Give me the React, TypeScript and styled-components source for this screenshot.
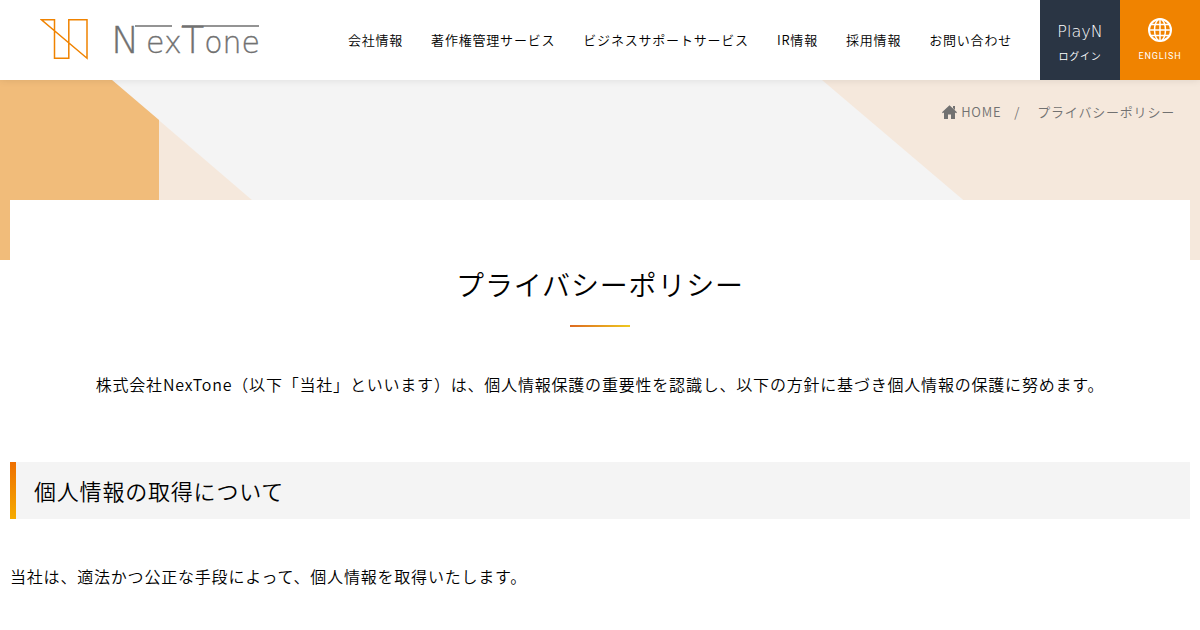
import React from "react";
import styled, { createGlobalStyle, css } from "styled-components";

const GlobalStyle = createGlobalStyle`
  *, *::before, *::after { box-sizing: border-box; }
  body {
    margin: 0;
    background: #fff;
    color: #000;
    font-family: "Noto Sans CJK JP DemiLight", "Noto Sans CJK JP", sans-serif;
    font-size: 16px;
    font-weight: 350;
    line-height: 32px;
    letter-spacing: 0.05em;
  }
  a { color: inherit; text-decoration: none; }
  h1, h2, p, ul, ol { margin: 0; padding: 0; }
  h1, h2 { font-weight: inherit; }
  ul, ol { list-style: none; }
  svg { display: block; }
`;

const Header = styled.header`
  position: relative;
  z-index: 2;
  display: flex;
  align-items: center;
  min-height: 80px;
  background: #fff;
  box-shadow: 0 0 8px rgba(0, 0, 0, 0.1);
`;

const LogoLink = styled.a`
  margin-left: 40px;
  margin-right: auto;
`;

const WordmarkText = styled.text`
  font-family: "DejaVu Sans Light", "DejaVu Sans", sans-serif;
  font-size: 30px;
  font-weight: 200;
  letter-spacing: 0;
  fill: #717171;
  stroke: #717171;
  stroke-width: 0.3;
`;

const Capital = styled.tspan`
  font-size: 38px;
`;

const Menu = styled.ul`
  display: flex;
  gap: 28px;
  margin-right: 28px;
  font-size: 13px;
  line-height: 20px;
  white-space: nowrap;
`;

const tones = {
  navy: css`
    background: #2a3544;
    font-size: 10px;
  `,
  orange: css`
    background: #f08300;
    font-family: Roboto, "Noto Sans CJK JP", sans-serif;
    font-size: 9px;
    font-weight: 400;
    letter-spacing: 0.1em;
  `,
};

const Tile = styled.a<{ $tone: keyof typeof tones }>`
  display: flex;
  flex-direction: column;
  align-items: center;
  align-self: stretch;
  justify-content: flex-end;
  gap: 6px;
  flex: 0 0 80px;
  padding-bottom: 16px;
  color: #fff;
  line-height: 16px;
  ${({ $tone }) => tones[$tone]}
`;

const PlayName = styled.span`
  font-family: "DejaVu Sans Light", "DejaVu Sans", sans-serif;
  font-size: 16px;
  font-weight: 200;
  line-height: 20px;
  letter-spacing: 0;
`;

const Hero = styled.div`
  position: relative;
  height: 180px;
  margin-bottom: -60px;
  background: #f4f4f4;
  overflow: hidden;
`;

const Shapes = styled.svg<{ $side: "left" | "right" }>`
  position: absolute;
  top: 0;
  ${({ $side }) => $side}: 0;
`;

const Breadcrumb = styled.ol`
  position: relative;
  display: flex;
  justify-content: flex-end;
  padding: 22px 25px 0 0;
  color: #717171;
  font-size: 13px;
  line-height: 20px;

  li + li::before {
    content: "/";
    margin: 0 17px 0 13px;
  }
`;

const HomeLink = styled.a`
  display: flex;
  align-items: center;
  gap: 4px;
`;

const Crumb = styled.li`
  display: flex;
`;

const Card = styled.main`
  position: relative;
  margin: 0 10px;
  padding: 60px 0;
  background: #fff;
`;

const Title = styled.h1`
  font-size: 28px;
  line-height: 48px;
  letter-spacing: 0.03em;
  text-align: center;

  &::after {
    content: "";
    display: block;
    width: 60px;
    height: 2px;
    margin: 17px auto 0;
    background: linear-gradient(to right, #dd6a20, #eec820);
  }
`;

const Lead = styled.p`
  margin-top: 41px;
  text-align: center;
`;

const SectionTitle = styled.h2`
  position: relative;
  margin: 62px 0 41px;
  padding: 12px 24px 13px;
  background: #f4f4f4;
  font-size: 22px;
  line-height: 32px;

  &::before {
    content: "";
    position: absolute;
    inset: 0 auto 0 0;
    width: 6px;
    background: linear-gradient(#ee6f00, #f5ab00);
  }
`;

const menu = [
  "会社情報",
  "著作権管理サービス",
  "ビジネスサポートサービス",
  "IR情報",
  "採用情報",
  "お問い合わせ",
];

function Logo() {
  return (
    <svg width="226" height="80" viewBox="40 0 226 80" role="img" aria-label="NexTone" fill="none">
      <path
        d="M41.500 19.800H54.500V58.200H68.800V19.800H87V58.200Z"
        stroke="#f08300"
        strokeWidth="1.500"
      />
      <WordmarkText x="111" y="53">
        <Capital>N</Capital>
        <tspan x="146">ex</tspan>
        <Capital x="181">T</Capital>one
      </WordmarkText>
      <path d="M135 26H172M182 26H259" stroke="#717171" strokeWidth="1.500" />
    </svg>
  );
}

function Globe() {
  return (
    <svg width="24" height="24" viewBox="0 0 24 24" fill="none" stroke="#fff" strokeWidth="1.500" aria-hidden="true">
      <circle cx="12" cy="12" r="11" strokeWidth="2" />
      <ellipse cx="12" cy="12" rx="5.500" ry="11" />
      <path d="M12 1V23M1 12H23M3 6.500H21M3 17.500H21" />
    </svg>
  );
}

function Home() {
  return (
    <svg width="15" height="14" viewBox="0 0 15 14" fill="#717171" aria-hidden="true">
      <path d="M7.500 0.300L15 7.300L14.200 8.300L13 7.500V14H9V9.500H6V14H2V7.500L0.800 8.300L0 7.300ZM11 1H13V5L11 3Z" />
    </svg>
  );
}

export default function App() {
  return (
    <>
      <GlobalStyle />
      <Header>
        <LogoLink href="#">
          <Logo />
        </LogoLink>
        <nav>
          <Menu>
            {menu.map((label) => (
              <li key={label}>
                <a href="#">{label}</a>
              </li>
            ))}
          </Menu>
        </nav>
        <Tile href="#" $tone="navy">
          <PlayName>PlayN</PlayName>
          ログイン
        </Tile>
        <Tile href="#" $tone="orange">
          <Globe />
          ENGLISH
        </Tile>
      </Header>
      <Hero>
        <Shapes $side="left" width="322" height="180" aria-hidden="true">
          <path d="M112 0L322 180H0V0Z" fill="#f5e8dc" />
          <path d="M0 0H112L159 40V180H0Z" fill="#f1bc7a" />
        </Shapes>
        <Shapes $side="right" width="378" height="180" aria-hidden="true">
          <path d="M0 0H378V180H212Z" fill="#f5e8dc" />
        </Shapes>
        <nav aria-label="breadcrumb">
          <Breadcrumb>
            <Crumb>
              <HomeLink href="#">
                <Home />
                HOME
              </HomeLink>
            </Crumb>
            <Crumb>プライバシーポリシー</Crumb>
          </Breadcrumb>
        </nav>
      </Hero>
      <Card>
        <Title>プライバシーポリシー</Title>
        <Lead>
          株式会社NexTone（以下「当社」といいます）は、個人情報保護の重要性を認識し、以下の方針に基づき個人情報の保護に努めます。
        </Lead>
        <section>
          <SectionTitle>個人情報の取得について</SectionTitle>
          <p>当社は、適法かつ公正な手段によって、個人情報を取得いたします。</p>
        </section>
      </Card>
    </>
  );
}
